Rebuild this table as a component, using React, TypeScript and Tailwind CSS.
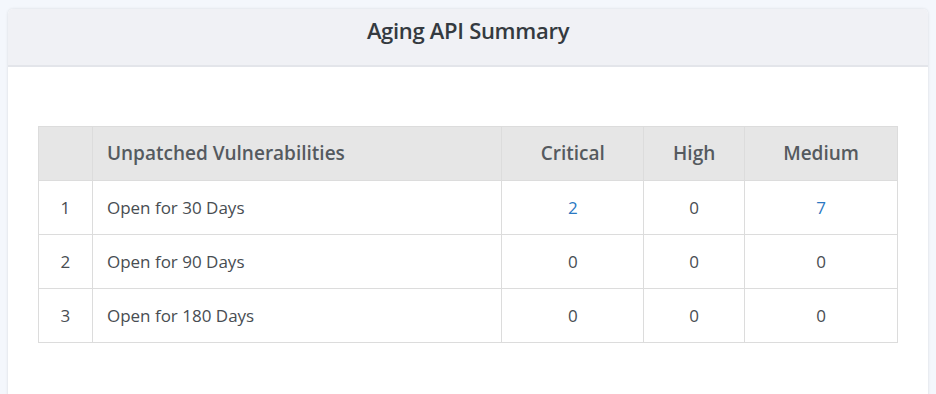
import React from "react";

const rows = [
  { n: 1, label: "Open for 30 Days", c: "2", h: "0", m: "7", cl: true, ml: true },
  { n: 2, label: "Open for 90 Days", c: "0", h: "0", m: "0" },
  { n: 3, label: "Open for 180 Days", c: "0", h: "0", m: "0" },
];

export default function App() {
  return (
    <div
      className="w-[936px] h-[394px] bg-[#f4f7fc] pt-[9px] pl-[8px] pr-[8px] overflow-hidden"
      style={{ fontFamily: '"Open Sans", "Noto Sans", sans-serif' }}
    >
      <div className="bg-white rounded-[5px] shadow-[0_0_3px_rgba(0,0,0,0.12)] h-[400px]">
        <div className="h-[58px] bg-[#f0f1f5] border-b-2 border-[#e3e5ea] rounded-t-[5px] flex justify-center pt-[5px]">
          <span className="text-[22px] font-semibold text-[#343a40] tracking-[-0.3px]">Aging API Summary</span>
        </div>
        <div className="px-[30px] pt-[59px]">
          <table className="w-[860px] border-collapse text-[17px] text-[#484d52]">
            <colgroup>
              <col className="w-[54px]" />
              <col className="w-[410px]" />
              <col className="w-[142px]" />
              <col className="w-[101px]" />
              <col className="w-[153px]" />
            </colgroup>
            <thead>
              <tr className="h-[54px] bg-[#e6e6e6] text-[#555a5f] text-[19px]">
                <th className="border border-[#dcdcdc]"></th>
                <th className="border border-[#dcdcdc] text-left pl-[14px] font-semibold">Unpatched Vulnerabilities</th>
                <th className="border border-[#dcdcdc] text-center font-semibold">Critical</th>
                <th className="border border-[#dcdcdc] text-center font-semibold">High</th>
                <th className="border border-[#dcdcdc] text-center font-semibold">Medium</th>
              </tr>
            </thead>
            <tbody>
              {rows.map((r) => (
                <tr key={r.n} className="h-[54px]">
                  <td className="border border-[#dcdcdc] text-center">{r.n}</td>
                  <td className="border border-[#dcdcdc] pl-[14px]">{r.label}</td>
                  <td className={`border border-[#dcdcdc] text-center ${r.cl ? "text-[#2b78c2]" : ""}`}>{r.c}</td>
                  <td className="border border-[#dcdcdc] text-center">{r.h}</td>
                  <td className={`border border-[#dcdcdc] text-center ${r.ml ? "text-[#2b78c2]" : ""}`}>{r.m}</td>
                </tr>
              ))}
            </tbody>
          </table>
        </div>
      </div>
    </div>
  );
}
